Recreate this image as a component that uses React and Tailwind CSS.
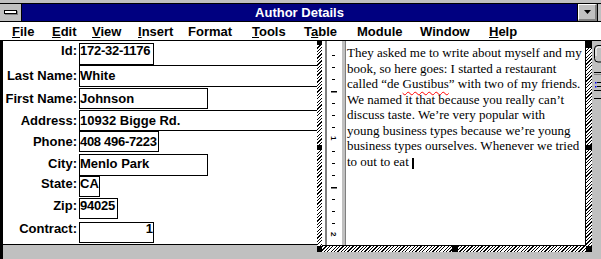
import React from "react";

const menu = [
  { pre: "", u: "F", post: "ile", w: "w-[40px]" },
  { pre: "", u: "E", post: "dit", w: "w-[40px]" },
  { pre: "", u: "V", post: "iew", w: "w-[46px]" },
  { pre: "", u: "I", post: "nsert", w: "w-[50px]" },
  { pre: "Format", u: "", post: "", w: "w-[64px]" },
  { pre: "", u: "T", post: "ools", w: "w-[52px]" },
  { pre: "T", u: "a", post: "ble", w: "w-[53px]" },
  { pre: "Module", u: "", post: "", w: "w-[63px]" },
  { pre: "Window", u: "", post: "", w: "w-[69px]" },
  { pre: "", u: "H", post: "elp", w: "w-[60px]" },
];

const rows = [
  { label: "Id:", value: "172-32-1176", row: "mt-0 leading-[14px]", box: "h-[22px] w-[75px] border pt-0 tracking-[-0.25px]" },
  { label: "Last Name:", value: "White", row: "mt-0 leading-[15px]", box: "h-[22px] flex-1 border-y border-l pt-[2px]" },
  { label: "First Name:", value: "Johnson", row: "mt-[1px] leading-[15px]", box: "h-[21px] w-[129px] border pt-[2px]" },
  { label: "Address:", value: "10932 Bigge Rd.", row: "mt-[1px] leading-[15px]", box: "h-[21px] flex-1 border-y border-l pt-[2px]" },
  { label: "Phone:", value: "408 496-7223", row: "mt-0 leading-[15px]", box: "h-[21px] w-[80px] border pt-[2px] tracking-[-0.3px]" },
  { label: "City:", value: "Menlo Park", row: "mt-[2px] leading-[15px]", box: "h-[22px] w-[129px] border pt-[1px]" },
  { label: "State:", value: "CA", row: "mt-0 leading-[14px]", box: "h-[21px] w-[21px] border pt-0" },
  { label: "Zip:", value: "94025", row: "mt-[1px] leading-[13px]", box: "h-[21px] w-[39px] border pt-0 tracking-[-0.25px]" },
  { label: "Contract:", value: "1", row: "mt-[3px] leading-[12px]", box: "h-[21px] w-[75px] border pt-0 text-right" },
];

const smallTicks = [14, 26, 38, 62, 74, 86, 110, 122, 134, 158, 170, 182];
const longTicks = [50, 146];

function Ruler() {
  return (
    <svg width="15" height="204" viewBox="0 0 15 204">
      {smallTicks.map((y) => (
        <rect key={y} x="5" y={y} width="3" height="1" fill="#000" />
      ))}
      {longTicks.map((y) => (
        <rect key={y} x="4" y={y} width="6" height="1.5" fill="#000" />
      ))}
      <text
        transform="translate(4 95) rotate(90)"
        fontSize="8"
        fontFamily="Liberation Sans, sans-serif"
        fill="#000"
      >
        1
      </text>
      <text
        transform="translate(4 191) rotate(90)"
        fontSize="8"
        fontFamily="Liberation Sans, sans-serif"
        fill="#000"
      >
        2
      </text>
    </svg>
  );
}

function Toolbox() {
  return (
    <svg width="9" height="70" viewBox="0 0 9 70">
      <path d="M9.5 4.5 H6 Q2.5 4.5 2.5 8 V17.5 Q2.5 21 6 21 H9.5" stroke="#000" fill="#c0c0c0" />
      <path d="M9 6 H6.5 Q4 6 4 8.5 V15" stroke="#fff" fill="none" />
      <rect x="2" y="31" width="7" height="1" fill="#000" />
      <rect x="2" y="33" width="7" height="1" fill="#808080" />
      <rect x="3" y="41" width="1.5" height="1.5" fill="#0000ff" />
      <rect x="3" y="45" width="1.5" height="1.5" fill="#0000ff" />
      <rect x="5" y="41" width="4" height="1" fill="#000" />
      <rect x="5" y="45" width="4" height="1" fill="#000" />
      <rect x="2" y="49" width="7" height="1" fill="#000" />
      <rect x="2" y="57" width="7" height="1" fill="#000" />
    </svg>
  );
}

export default function App() {
  const hatch =
    "bg-white bg-[image:repeating-linear-gradient(135deg,#000_0px,#000_0.9px,#fff_0.9px,#fff_2.4px)]";
  return (
    <div className="w-[601px] h-[259px] bg-[#c0c0c0] overflow-hidden flex flex-col font-['Liberation_Sans',Arial,sans-serif] text-[13px] font-bold text-black">
      {/* top frame */}
      <div className="h-[3px] bg-[#c0c0c0] flex-none" />
      <div className="h-px bg-black flex-none" />
      {/* title bar */}
      <div className="h-[17px] flex flex-none">
        <div className="w-[21px] bg-[#c0c0c0] flex items-center justify-center">
          <div className="w-[13px] h-[4px] bg-white border border-black shadow-[1px_1px_0_#808080] mb-[1px]" />
        </div>
        <div className="w-px bg-black" />
        <div className="w-[555px] bg-[#000080] text-white flex items-center justify-center leading-none">
          Author Details
        </div>
        <div className="w-px bg-black" />
        <div className="w-[19px] bg-[#c0c0c0] border-t border-l border-white border-r-2 border-b-2 border-r-[#808080] border-b-[#808080] flex items-center justify-center">
          <svg width="7" height="4" viewBox="0 0 7 4">
            <polygon points="0,0 7,0 3.5,4" fill="#000" />
          </svg>
        </div>
        <div className="w-px bg-black" />
        <div className="flex-1 bg-[#c0c0c0]" />
      </div>
      <div className="h-px bg-black flex-none" />
      {/* menu bar */}
      <div className="h-[18px] bg-white flex items-center pl-[12px] leading-none flex-none">
        {menu.map((m, i) => (
          <span key={i} className={`${m.w} flex-none whitespace-nowrap`}>
            {m.pre}
            {m.u && <span className="underline decoration-1 underline-offset-[1px]">{m.u}</span>}
            {m.post}
          </span>
        ))}
      </div>
      <div className="h-px bg-black flex-none" />
      {/* main area */}
      <div className="flex-1 flex items-start min-h-0">
        <div className="w-[3px] self-stretch bg-black flex-none" />
        {/* form */}
        <div className="w-[314px] h-[204px] bg-white border-b border-black pt-[2px] flex flex-col flex-none">
          {rows.map((r) => (
            <div key={r.label} className={`flex items-baseline ${r.row}`}>
              <div className="w-[74px] text-right whitespace-nowrap flex-none">{r.label}</div>
              <div className={`ml-[2px] border-black bg-white whitespace-nowrap ${r.box}`}>
                {r.value}
              </div>
            </div>
          ))}
        </div>
        {/* selected memo object */}
        <div className={`relative w-[275px] h-[211px] flex-none ${hatch}`}>
          <div className="ml-[5px] mr-[6px] h-[205px] bg-white flex border-b border-black">
            {/* vertical ruler */}
            <div className="w-[24px] flex flex-none">
              <div className="w-[3px] bg-white" />
              <div className="w-[2px] bg-[#808080]" />
              <div className="w-[15px] bg-white">
                <Ruler />
              </div>
              <div className="w-[3px] bg-[#c0c0c0]" />
              <div className="w-px bg-[#808080]" />
            </div>
            {/* text */}
            <div className="flex-1 border-r border-black pl-[1px] pt-[4px] font-['Liberation_Serif','Times_New_Roman',serif] font-normal text-[13px] leading-[15.5px] whitespace-nowrap overflow-hidden">
              <div>They asked me to write about myself and my</div>
              <div>book, so here goes: I started a restaurant</div>
              <div>
                called “de{" "}
                <span className="underline decoration-wavy decoration-[#ff0000] decoration-1 underline-offset-[3px]">
                  Gustibus
                </span>
                ” with two of my friends.
              </div>
              <div>We named it that because you really can’t</div>
              <div>discuss taste. We’re very popular with</div>
              <div>young business types because we’re young</div>
              <div>business types ourselves. Whenever we tried</div>
              <div>
                to out to eat
                <span className="inline-block w-[2px] h-[11px] bg-black ml-[3px] align-[-3px]" />
              </div>
            </div>
          </div>
          {/* sizing handles */}
          <div className="absolute left-0 top-0 w-[5px] h-[4px] bg-black" />
          <div className="absolute left-0 top-[104px] w-[5px] h-[5px] bg-black" />
          <div className="absolute left-0 top-[205px] w-[5px] h-[6px] bg-black" />
          <div className="absolute left-[269px] top-0 w-[6px] h-[7px] bg-black" />
          <div className="absolute left-[269px] top-[104px] w-[6px] h-[5px] bg-black" />
          <div className="absolute left-[269px] top-[205px] w-[6px] h-[6px] bg-black" />
          <div className="absolute left-[135px] top-[205px] w-[6px] h-[6px] bg-black" />
        </div>
        {/* toolbox edge */}
        <div className="w-[9px] self-stretch bg-[#c0c0c0] flex-none">
          <Toolbox />
        </div>
      </div>
    </div>
  );
}
